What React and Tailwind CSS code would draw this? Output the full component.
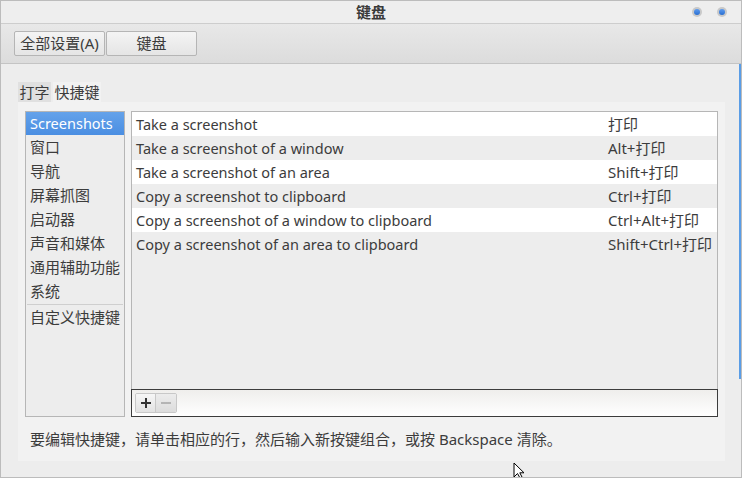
import React from "react";

const font = { fontFamily: '"Noto Sans", "Noto Sans CJK SC", sans-serif' };

const categories = ["窗口", "导航", "屏幕抓图", "启动器", "声音和媒体", "通用辅助功能", "系统"];

const rows = [
  ["Take a screenshot", "打印"],
  ["Take a screenshot of a window", "Alt+打印"],
  ["Take a screenshot of an area", "Shift+打印"],
  ["Copy a screenshot to clipboard", "Ctrl+打印"],
  ["Copy a screenshot of a window to clipboard", "Ctrl+Alt+打印"],
  ["Copy a screenshot of an area to clipboard", "Shift+Ctrl+打印"],
];

function Dot() {
  return (
    <div className="w-[10px] h-[10px] rounded-full bg-[#c9c9c9] flex items-center justify-center">
      <div className="w-[6px] h-[6px] rounded-full bg-gradient-to-b from-[#5d9cf0] to-[#2a6fd0]" />
    </div>
  );
}

export default function App() {
  return (
    <div
      className="relative w-[742px] h-[478px] border border-[#bcbcbc] bg-[#ededed] text-[#3c3c3c] flex flex-col overflow-hidden"
      style={font}
    >
      {/* title bar */}
      <div className="h-[23px] shrink-0 grid grid-cols-[1fr_auto_1fr] items-center bg-[#eeeeee] border-b border-[#cdcdcd]">
        <div />
        <div className="text-[15px] font-bold leading-none text-[#3a3a3a]">键盘</div>
        <div className="flex justify-end items-center gap-[15px] pr-[14px]">
          <Dot />
          <Dot />
        </div>
      </div>

      {/* toolbar */}
      <div className="h-[40px] shrink-0 flex items-center pl-[13px] gap-[1px] bg-gradient-to-b from-[#e8e8e8] to-[#dcdcdc] border-b border-[#c4c4c4]">
        <button className="w-[91px] h-[25px] rounded-[2px] border border-[#b5b5b5] bg-gradient-to-b from-[#f4f4f4] to-[#e5e5e5] text-[15px] leading-none text-[#3c3c3c] flex items-center justify-center">
          全部设置(A)
        </button>
        <button className="w-[91px] h-[25px] rounded-[2px] border border-[#b5b5b5] bg-gradient-to-b from-[#f4f4f4] to-[#e5e5e5] text-[15px] leading-none text-[#3c3c3c] flex items-center justify-center">
          键盘
        </button>
      </div>

      {/* content */}
      <div className="flex-1 flex">
        <div className="flex-1 flex flex-col pt-[18px] pl-[17px] pr-[14px] pb-[16px]">
          {/* tabs */}
          <div className="flex h-[20px] gap-[2px]">
            <div className="w-[33px] bg-[#e0e0e0] text-[15px] leading-[20px] text-center">打字</div>
            <div className="w-[48px] bg-[#f2f2f2] text-[15px] leading-[20px] text-center">快捷键</div>
          </div>
          {/* panel */}
          <div className="flex-1 bg-[#f2f2f2] flex flex-col pt-[9px] px-[7px]">
            <div className="flex gap-[6px] h-[306px]">
              {/* category list */}
              <div className="w-[100px] border border-[#b6b6b6] bg-[#ededed] flex flex-col">
                <div className="h-[23px] bg-gradient-to-b from-[#64a2ea] to-[#4a8ee2] text-white text-[14.5px] leading-[23px] pl-[4px]">
                  Screenshots
                </div>
                {categories.map((c) => (
                  <div key={c} className="h-[24px] text-[15px] leading-[24px] pl-[4px]">
                    {c}
                  </div>
                ))}
                <div className="mx-[1px] h-[1px] bg-[#cfcfcf] mt-[1px]" />
                <div className="h-[24px] text-[15px] leading-[24px] pl-[4px]">自定义快捷键</div>
              </div>
              {/* table */}
              <div className="w-[587px] flex flex-col">
                <div className="flex-1 border-x border-t border-[#b6b6b6] bg-[#ededed] flex flex-col">
                  {rows.map(([d, a], i) => (
                    <div
                      key={d}
                      className={
                        "h-[24px] flex items-center " +
                        (i % 2 === 0 ? "bg-white" : "bg-[#ededed]")
                      }
                    >
                      <div className="w-[476px] pl-[4px] whitespace-nowrap text-[14.5px] leading-none">{d}</div>
                      <div className="whitespace-nowrap text-[15px] leading-none">{a}</div>
                    </div>
                  ))}
                </div>
                <div className="h-[28px] border border-[#3c3c3c] bg-gradient-to-b from-[#efeeec] to-[#ffffff] flex items-center pl-[3px]">
                  <div className="flex h-[20px] rounded-[2px] border border-[#c8c8c8] overflow-hidden">
                    <div className="w-[20px] bg-gradient-to-b from-[#f6f6f6] to-[#e2e2e2] flex items-center justify-center border-r border-[#c8c8c8]">
                      <svg width="12" height="12" viewBox="0 0 12 12">
                        <path d="M6 1v10M1 6h10" stroke="#333" strokeWidth="2" />
                      </svg>
                    </div>
                    <div className="w-[20px] bg-gradient-to-b from-[#ececec] to-[#dcdcdc] flex items-center justify-center">
                      <svg width="12" height="12" viewBox="0 0 12 12">
                        <path d="M1 6h10" stroke="#a5a5a5" strokeWidth="1.6" />
                      </svg>
                    </div>
                  </div>
                </div>
              </div>
            </div>
            <div className="flex-1 flex items-center pl-[5px] text-[15px] whitespace-nowrap">
              要编辑快捷键，请单击相应的行，然后输入新按键组合，或按 Backspace 清除。
            </div>
          </div>
        </div>
        <div className="w-[3px] flex flex-col">
          <div className="h-[315px] bg-[#5a9de6]" />
        </div>
      </div>

      {/* mouse pointer */}
      <svg className="absolute left-[512px] top-[461px]" width="12" height="17" viewBox="0 0 12 17">
        <path d="M1 1 L1 15 L4.5 11.5 L7 16 L9 15 L6.8 10.8 L11 10.8 Z" fill="#fff" stroke="#000" strokeWidth="1" strokeLinejoin="round" />
      </svg>
    </div>
  );
}
